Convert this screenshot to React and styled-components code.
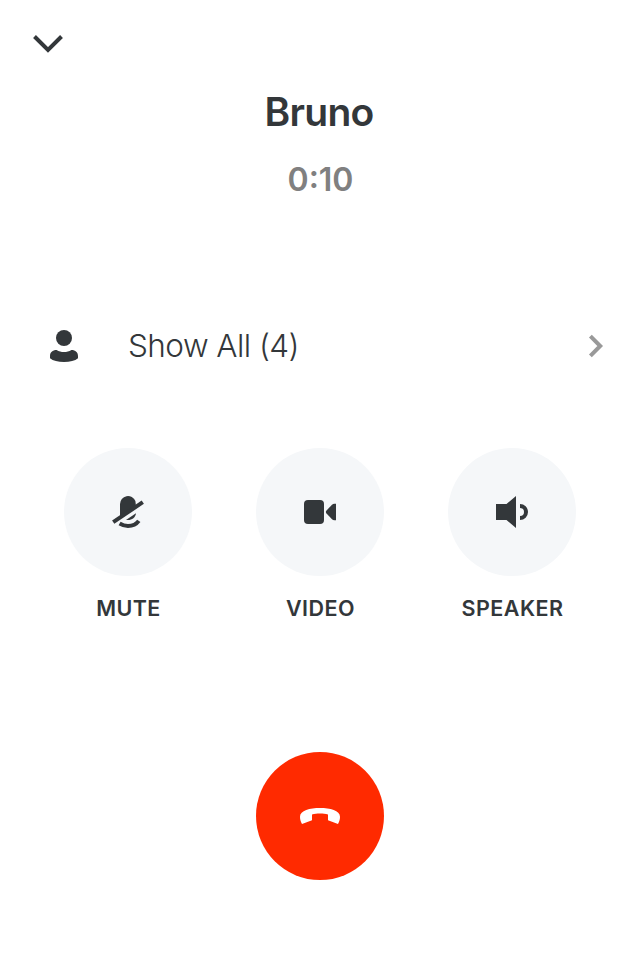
import React from 'react';
import styled, { createGlobalStyle } from 'styled-components';

const GlobalStyle = createGlobalStyle`
  * { box-sizing: border-box; }
  body { margin: 0; background: #fff; }
  button { font: inherit; color: inherit; border: 0; padding: 0; background: none; cursor: pointer; }
  svg { display: block; flex: none; }
`;

const Screen = styled.main`
  width: 640px;
  height: 960px;
  display: flex;
  flex-direction: column;
  background: #fff;
  color: #33373a;
  font-family: Inter, 'Liberation Sans', sans-serif;
`;

const TopBar = styled.header`
  height: 88px;
  padding: 28px 32px;
  display: flex;
  align-items: flex-start;
`;

const CallInfo = styled.section`
  height: 216px;
  display: flex;
  flex-direction: column;
  align-items: center;
`;

const Name = styled.h1`
  margin: 0;
  padding-right: 2px;
  font-size: 39px;
  line-height: 48px;
  font-weight: 600;
  letter-spacing: -0.7px;
`;

const Timer = styled.div`
  margin-top: 24px;
  padding-left: 1px;
  font-size: 32px;
  line-height: 40px;
  font-weight: 600;
  color: #808080;
`;

const ParticipantsRow = styled.button`
  && { padding: 0 32px 0 48px; }
  height: 84px;
  display: flex;
  align-items: center;
`;

const RowLabel = styled.span`
  flex: 1;
  margin: 0 0 1px 48px;
  text-align: left;
  font-size: 31.5px;
  line-height: 40px;
  font-weight: 300;
  letter-spacing: -0.55px;
`;

const Controls = styled.section`
  margin-top: 60px;
  padding: 0 64px;
  display: grid;
  grid-template-columns: repeat(3, 128px);
  column-gap: 64px;
`;

const Control = styled.div`
  display: flex;
  flex-direction: column;
  align-items: center;
  gap: 18px;
`;

const RoundButton = styled.button`
  width: 128px;
  height: 128px;
  display: flex;
  align-items: center;
  justify-content: center;
  border-radius: 50%;
  background: ${({ $danger }) => ($danger ? '#ff2a00' : '#f5f7f9')};
  color: ${({ $danger }) => ($danger ? '#fff' : 'inherit')};
`;

const ControlLabel = styled.span`
  padding-left: 1px;
  font-size: 21.5px;
  line-height: 28px;
  font-weight: 600;
  letter-spacing: 0.45px;
`;

const HangUpArea = styled.footer`
  margin-top: 130px;
  display: flex;
  justify-content: center;
`;

const ChevronDown = () => (
  <svg width="32" height="32" viewBox="0 0 32 32" fill="none" stroke="currentColor" strokeWidth="4">
    <path d="M2.5 8.5 16 22 29.5 8.5" />
  </svg>
);

const ChevronRight = () => (
  <svg width="24" height="32" viewBox="0 0 24 32" fill="none" stroke="#999" strokeWidth="4">
    <path d="M6.4 6.2 16.2 16 6.4 25.8" />
  </svg>
);

const Person = () => (
  <svg width="32" height="32" viewBox="0 0 32 32" fill="currentColor">
    <circle cx="16" cy="8" r="8" />
    <path d="M8.6 20C11 21.6 13.2 22 16 22S21 21.6 23.4 20C27.5 20 30 22.4 30 26V28.2C27 30.8 22 32 16 32S5 30.8 2 28.2V26C2 22.4 4.5 20 8.6 20Z" />
  </svg>
);

const MicOff = () => (
  <svg width="32" height="32" viewBox="0 0 32 32" fill="currentColor" overflow="visible">
    <path d="M8 21V8a8 8 0 0 1 15.4-3L24 10.4Z" />
    <path d="M14 23.9 24 17.2C23.6 21.2 20 24 16 24Q14.9 24 14 23.9Z" />
    <path d="M1.2 26.1 30.8 6.2" stroke="currentColor" strokeWidth="4" />
    <path d="M7.6 27.5Q11.8 30 16 30C20.3 30 24.4 28.2 26.8 24.9" fill="none" stroke="currentColor" strokeWidth="4" />
  </svg>
);

const Video = () => (
  <svg width="32" height="32" viewBox="0 0 32 32" fill="currentColor">
    <rect y="4" width="20" height="24" rx="4" />
    <path d="M22.5 14.5 28 8.8Q29 7.8 30.4 7.8H32V24.2H30.4Q29 24.2 28 23.2L22.5 17.5Q21.2 16 22.5 14.5Z" />
  </svg>
);

const Speaker = () => (
  <svg width="32" height="32" viewBox="0 0 32 32" fill="currentColor">
    <path d="M0 8H10.5L20 0V32L10.5 24H0Z" />
    <path d="M24 10A6 6 0 0 1 24 22" fill="none" stroke="currentColor" strokeWidth="4" />
  </svg>
);

const HangUp = () => (
  <svg width="40" height="24" viewBox="0 0 40 24" fill="currentColor">
    <path d="M2 20C.7 18 0 15.4 0 12.8C0 6.5 10 4 20 4S40 6.5 40 12.8C40 15.4 39.3 18 38 20L28 16.2V10.5C25.5 9.8 23 9.5 20 9.5S14.5 9.8 12 10.5V16.2Z" />
  </svg>
);

const controls = [
  { label: 'MUTE', Icon: MicOff },
  { label: 'VIDEO', Icon: Video },
  { label: 'SPEAKER', Icon: Speaker },
];

export default function App() {
  return (
    <>
      <GlobalStyle />
      <Screen>
        <TopBar>
          <button aria-label="Minimize"><ChevronDown /></button>
        </TopBar>
        <CallInfo>
          <Name>Bruno</Name>
          <Timer>0:10</Timer>
        </CallInfo>
        <ParticipantsRow>
          <Person />
          <RowLabel>Show All (4)</RowLabel>
          <ChevronRight />
        </ParticipantsRow>
        <Controls>
          {controls.map(({ label, Icon }) => (
            <Control key={label}>
              <RoundButton aria-label={label}><Icon /></RoundButton>
              <ControlLabel>{label}</ControlLabel>
            </Control>
          ))}
        </Controls>
        <HangUpArea>
          <RoundButton $danger aria-label="End call"><HangUp /></RoundButton>
        </HangUpArea>
      </Screen>
    </>
  );
}
